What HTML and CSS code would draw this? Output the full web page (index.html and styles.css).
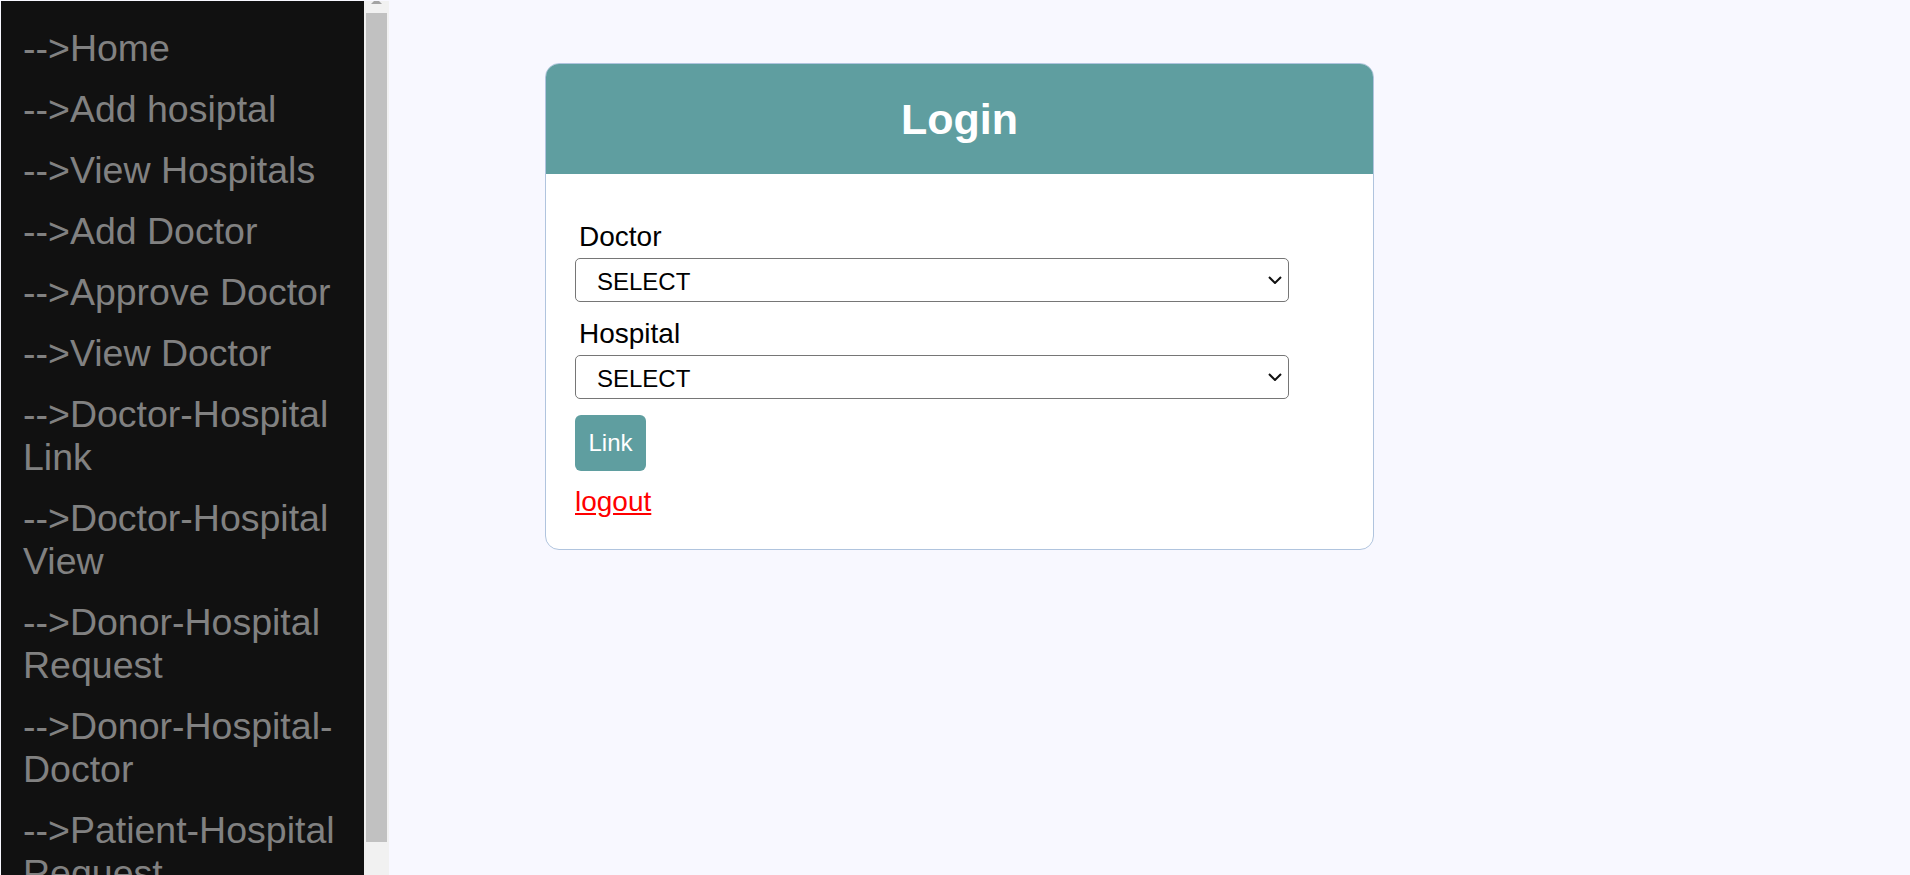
FILE: index.html
```html
<!DOCTYPE html>
<html lang="en">
<head>
<meta charset="utf-8">
<title>Login</title>
<link rel="stylesheet" href="styles.css">
</head>
<body>
<div class="app">
  <aside class="sidebar">
    <nav class="sidenav">
      <a href="#">--&gt;Home</a>
      <a href="#">--&gt;Add hosiptal</a>
      <a href="#">--&gt;View Hospitals</a>
      <a href="#">--&gt;Add Doctor</a>
      <a href="#">--&gt;Approve Doctor</a>
      <a href="#">--&gt;View Doctor</a>
      <a href="#">--&gt;Doctor-Hospital Link</a>
      <a href="#">--&gt;Doctor-Hospital View</a>
      <a href="#">--&gt;Donor-Hospital Request</a>
      <a href="#">--&gt;Donor-Hospital-Doctor</a>
      <a href="#">--&gt;Patient-Hospital Request</a>
    </nav>
    <div class="scrollbar">
      <div class="sb-button"><span class="sb-arrow"></span></div>
      <div class="sb-thumb"></div>
    </div>
  </aside>
  <main class="main">
    <div class="card">
      <div class="card-header"><h2>Login</h2></div>
      <form class="card-body">
        <label class="field-label">Doctor</label>
        <div class="select-wrap">
          <select class="select"><option>SELECT</option></select>
          <svg class="chev" width="14" height="8" viewBox="0 0 14 8"><path d="M1 1 L7 7 L13 1" fill="none" stroke="#111" stroke-width="2"/></svg>
        </div>
        <label class="field-label">Hospital</label>
        <div class="select-wrap">
          <select class="select"><option>SELECT</option></select>
          <svg class="chev" width="14" height="8" viewBox="0 0 14 8"><path d="M1 1 L7 7 L13 1" fill="none" stroke="#111" stroke-width="2"/></svg>
        </div>
        <button type="button" class="btn">Link</button>
        <div class="logout-row"><a href="#" class="logout">logout</a></div>
      </form>
    </div>
  </main>
</div>
</body>
</html>
```
FILE: styles.css
```css
html, body {
  margin: 0;
  height: 100%;
  overflow: hidden;
}
body {
  background: #f8f8ff;
  font-family: "Liberation Sans", Arial, sans-serif;
}
.app {
  display: flex;
  height: 100vh;
  box-sizing: border-box;
  padding: 1px 0 0 1px;
}
.sidebar {
  display: flex;
  flex: 0 0 388px;
  overflow: hidden;
}
.sidenav {
  width: 363px;
  flex: 0 0 363px;
  background: #111;
  padding-top: 17px;
  box-sizing: border-box;
  overflow: hidden;
}
.sidenav a {
  display: block;
  padding: 9px 19px 9px 22px;
  font-size: 37.5px;
  line-height: 43px;
  color: #818181;
  text-decoration: none;
}
.scrollbar {
  width: 25px;
  flex: 0 0 25px;
  background: #f1f1f1;
  display: flex;
  flex-direction: column;
  align-items: center;
}
.sb-button {
  height: 12px;
  width: 25px;
  display: flex;
  justify-content: center;
}
.sb-arrow {
  width: 5px;
  height: 0;
  border-left: 3px solid transparent;
  border-right: 3px solid transparent;
  border-bottom: 3px solid #a3a3a3;
}
.sb-thumb {
  width: 21px;
  height: 829px;
  background: #c1c1c1;
}
.main {
  flex: 1;
  padding: 62px 0 0 156px;
}
.card {
  width: 829px;
  box-sizing: border-box;
  border: 1px solid #b0c4de;
  border-radius: 14px;
  background: #fff;
  overflow: hidden;
}
.card-header {
  height: 110px;
  background: #5f9ea0;
  display: flex;
  align-items: center;
  justify-content: center;
}
.card-header h2 {
  margin: 0;
  font-size: 43px;
  line-height: 48px;
  font-weight: bold;
  color: #fff;
}
.card-body {
  padding: 47px 29px 31px;
  margin: 0;
}
.field-label {
  display: block;
  font-size: 28px;
  line-height: 32px;
  margin: 0 0 5px 4px;
  color: #000;
}
.select-wrap {
  position: relative;
  width: 714px;
  margin-bottom: 16px;
}
.select {
  appearance: none;
  -webkit-appearance: none;
  display: block;
  width: 714px;
  height: 44px;
  box-sizing: border-box;
  border: 1px solid #767676;
  border-radius: 5px;
  background: #fff;
  color: #000;
  font-family: "Liberation Sans", Arial, sans-serif;
  font-size: 24px;
  padding: 2px 0 0 21px;
  margin: 0;
}
.chev {
  position: absolute;
  right: 7px;
  top: 50%;
  transform: translateY(-50%);
  pointer-events: none;
}
.btn {
  display: block;
  height: 56px;
  padding: 0 13.5px;
  border: none;
  border-radius: 6px;
  background: #5f9ea0;
  color: #fff;
  font-family: "Liberation Sans", Arial, sans-serif;
  font-size: 24px;
  margin: 0;
}
.logout-row {
  margin-top: 15px;
  font-size: 28px;
  line-height: 32px;
}
.logout {
  color: #f00;
  text-decoration: underline;
}
```
